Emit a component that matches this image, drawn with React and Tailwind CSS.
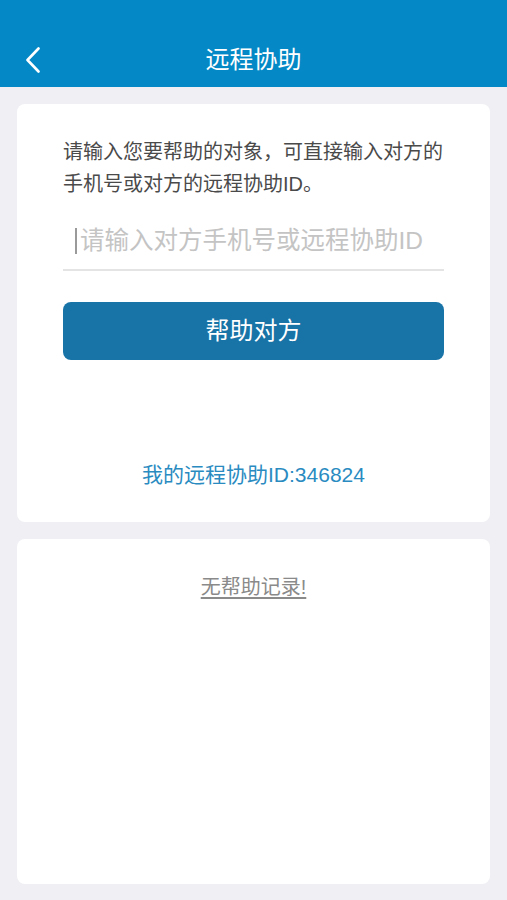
export default function App() {
  const font = { fontFamily: '"Liberation Sans", "Noto Sans CJK SC", sans-serif' };

  return (
    <div className="min-h-[900px] bg-[#efeff4] flex flex-col" style={font}>
      {/* nav bar */}
      <div className="h-[87px] bg-[#0489c6] pt-[40px]">
        <div className="relative h-[47px] flex items-center justify-center">
          <button className="absolute left-[22px] top-[6px] w-[22px] h-[28px] flex items-center justify-center">
            <svg width="16" height="26" viewBox="0 0 16 26" fill="none">
              <path d="M13.5 1.5 L2.5 13 L13.5 24.5" stroke="#fff" strokeWidth="2.6" strokeLinecap="round" strokeLinejoin="round" />
            </svg>
          </button>
          <span className="text-white text-[24px] leading-none -mt-[7px]">远程协助</span>
        </div>
      </div>

      {/* help form */}
      <div className="mx-[17px] mt-[17px] bg-white rounded-[8px] px-[46px] pt-[32px] pb-[33px]">
        <p className="text-[20px] leading-[32px] text-[#4a4a4a]">
          请输入您要帮助的对象，可直接输入对方的手机号或对方的远程协助ID。
        </p>
        <div className="mt-[13px] h-[58px] flex items-center border-b-2 border-[#e4e4e4]">
          <span className="ml-[12px] w-[2px] h-[26px] bg-[#9a9a9a] shrink-0" />
          <input
            className="flex-1 min-w-0 ml-[3px] text-[24.5px] text-[#333] placeholder:text-[#c4c4c4] outline-none bg-transparent"
            placeholder="请输入对方手机号或远程协助ID"
          />
        </div>
        <button className="mt-[31px] w-full h-[58px] rounded-[8px] bg-[#1873a7] text-white text-[24px] flex items-center justify-center">
          帮助对方
        </button>
        <div className="mt-[101px] text-center text-[21px] leading-[28px] text-[#2a8bc1]">
          我的远程协助ID:346824
        </div>
      </div>

      {/* records */}
      <div className="mx-[17px] mt-[17px] mb-[17px] h-[345px] bg-white rounded-[8px] pt-[34px] text-center">
        <span className="text-[20px] leading-[28px] text-[#8a8a8a] underline underline-offset-[3px]">
          无帮助记录!
        </span>
      </div>
    </div>
  );
}
